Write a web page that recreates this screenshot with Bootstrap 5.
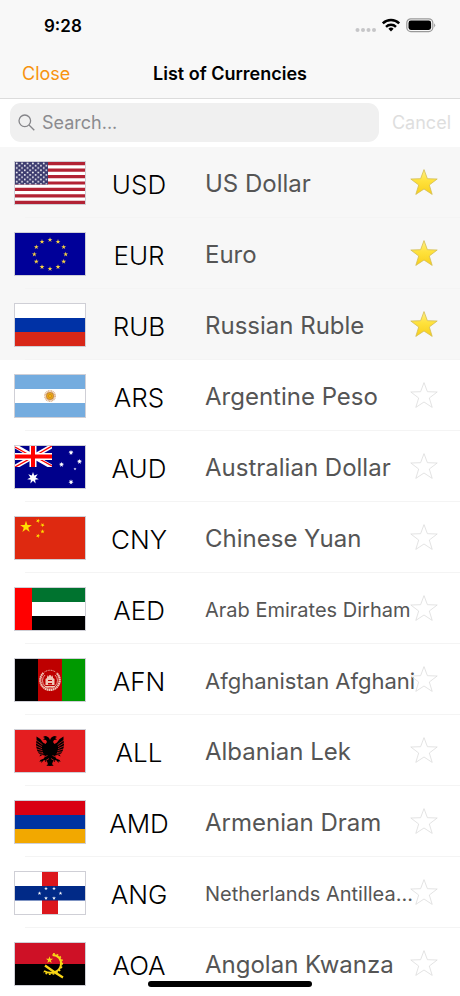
<!DOCTYPE html>
<html lang="en">
<head>
<meta charset="utf-8">
<meta name="viewport" content="width=device-width, initial-scale=1">
<title>List of Currencies</title>
<link href="https://cdn.jsdelivr.net/npm/bootstrap@5.3.0/dist/css/bootstrap.min.css" rel="stylesheet">
<style>
  body { font-family: Inter, "Liberation Sans", sans-serif; color: #000; background: #fff; }
  .top-area { background: #f8f8f8; border-bottom: 1px solid #dcdcdc; }
  .status-bar { height: 50px; padding: 2px 24px 0 44px; }
  .clock { font-size: 17px; font-weight: 600; line-height: 20px; }
  .title-bar { display: grid; grid-template-columns: 1fr auto 1fr; height: 48px; padding: 0 22px; }
  .title-bar h1 { font-size: 18px; font-weight: 600; line-height: 24px; }
  .plain-btn { border: 0; background: none; padding: 0; font-size: 18px; line-height: 24px; }
  .close-btn { color: #f7930f; }
  .cancel-btn { color: #dedede; }
  .search-row { padding: 4px 9px 5px 10px; gap: 13px; }
  .search-box { background: #f0f0f0; border-radius: 11px; height: 39px; padding: 0 8px; gap: 7px; }
  .search-box input { border: 0; background: none; outline: 0; padding: 0; min-width: 0; font-size: 18px; line-height: 24px; }
  .search-box input::placeholder { color: #8b8b8f; opacity: 1; }
  .money-list { overflow-y: auto; scrollbar-width: none; min-height: 0; }
  .money-list::-webkit-scrollbar { display: none; }
  .money-row { display: grid; grid-template-columns: 72px 106px 1fr 28px; height: 71px; flex-shrink: 0; padding: 1px 22px 0 14px; align-items: center;
    background: linear-gradient(#f4f4f4, #f4f4f4) 25px 100% / 100% 1px no-repeat; }
  .money-row.favourite { background-color: #f7f7f7; }
  .flag { width: 72px; height: 44px; border: 1px solid #cfcfd6; display: block; }
  .code { font-size: 26px; font-weight: 300; line-height: 32px; padding-top: 3px; text-align: center; }
  .money-name { font-size: 24px; line-height: 32px; color: #555; padding: 2px 0 0 13px; white-space: nowrap; min-width: 0; }
  .size-m { font-size: 22px; }
  .size-s { font-size: 20px; }
  .star-btn svg { width: 28px; height: 28px; display: block; fill: none; stroke: #dcdcdc; }
  .favourite .star-btn svg { fill: url(#gold); stroke: #d3bd52; }
  .home-bar { position: fixed; left: 50%; bottom: 9px; width: 164px; height: 6px; margin-left: -82px; border-radius: 3px; background: #000; }
</style>
<script src="https://cdn.jsdelivr.net/npm/bootstrap@5.3.0/dist/js/bootstrap.bundle.min.js"></script>
</head>
<body>
<svg width="0" height="0" class="position-absolute" aria-hidden="true">
  <defs>
    <linearGradient id="gold" x1="0" y1="0" x2="0" y2="1"><stop offset="0" stop-color="#fff08a"/><stop offset=".45" stop-color="#ffe23c"/><stop offset="1" stop-color="#f8cf1c"/></linearGradient>
    <pattern id="canton" width="5.4" height="4.6" patternUnits="userSpaceOnUse"><circle cx="1.7" cy="1.4" r=".9" fill="#fff"/><circle cx="4.4" cy="3.7" r=".9" fill="#fff"/></pattern>
    <polygon id="s5" points="0,-1 .225,-.309 .951,-.309 .363,.118 .588,.809 0,.382 -.588,.809 -.363,.118 -.951,-.309 -.225,-.309"/>
    <polygon id="s7" points="0,-1 .2,-.41 .78,-.62 .44,-.1 .97,.22 .36,.28 .43,.9 0,.45 -.43,.9 -.36,.28 -.97,.22 -.44,-.1 -.78,-.62 -.2,-.41"/>
    <symbol id="fav" viewBox="-14 -14 28 28"><path d="M0-13.4 3.4-4.3 13.2-4 5.3 2 8.2 11.4 0 6-8.2 11.4-5.3 2-13.2-4-3.4-4.3Z" stroke-width=".8" stroke-linejoin="round"/></symbol>
  </defs>
</svg>
<div class="vh-100 d-flex flex-column overflow-hidden">
  <header class="top-area flex-shrink-0">
    <div class="status-bar d-flex align-items-center">
      <span class="clock">9:28</span>
      <svg class="ms-auto" width="82" height="20" viewBox="0 0 82 20" aria-hidden="true">
        <g fill="#c6c6c8"><circle cx="3.500" cy="14" r="2"/><circle cx="9" cy="14" r="2"/><circle cx="14.500" cy="14" r="2"/><circle cx="20" cy="14" r="2"/></g>
        <g fill="none" stroke="#000" stroke-width="2.500"><path d="M28.800 7.300a11.800 11.800 0 0 1 16.400 0"/><path d="M32 10.800a7.300 7.300 0 0 1 10 0"/></g>
        <path d="M34.400 12.700a4 4 0 0 1 5.200 0L37 15.600Z"/>
        <rect x="52.800" y="2.800" width="26" height="12.800" rx="4" fill="none" stroke="#999" stroke-width="1.200"/>
        <rect x="54.500" y="4.500" width="22.600" height="9.400" rx="2.400"/>
        <path d="M80.200 7.200q2 2 0 4.200Z" fill="#999"/>
      </svg>
    </div>
    <nav class="title-bar align-items-center" aria-label="Title bar">
      <button type="button" class="plain-btn close-btn text-start">Close</button>
      <h1 class="m-0">List of Currencies</h1>
    </nav>
  </header>
  <form class="search-row d-flex align-items-center flex-shrink-0" role="search">
    <label class="search-box d-flex align-items-center flex-grow-1" for="search">
      <svg width="17" height="17" viewBox="0 0 17 17" fill="none" stroke="#858589" stroke-width="1.300" aria-hidden="true"><circle cx="6.800" cy="6.800" r="5.800"/><path d="m11 11 5.300 5.300"/></svg>
      <input id="search" type="text" class="flex-grow-1" placeholder="Search..." aria-label="Search currencies">
    </label>
    <button type="button" class="plain-btn cancel-btn" disabled>Cancel</button>
  </form>
  <main class="money-list d-flex flex-column flex-grow-1">
    <div class="money-row favourite">
      <svg class="flag" viewBox="0 0 70 42" preserveAspectRatio="none" role="img" aria-label="United States"><path fill="#fff" d="M0 0h70v42H0z"/><path stroke="#b22234" stroke-width="3.230" d="M0 1.620h70M0 8.080h70M0 14.540h70M0 21h70M0 27.460h70M0 33.920h70M0 40.380h70"/><path fill="#3c3b6e" d="M0 0h33v22.600H0z"/><path fill="url(#canton)" d="M0 0h32.500v22.600H0z"/></svg>
      <span class="code">USD</span><span class="money-name">US Dollar</span>
      <button type="button" class="plain-btn star-btn" aria-label="Remove US Dollar from favourites"><svg><use href="#fav"/></svg></button>
    </div>
    <div class="money-row favourite">
      <svg class="flag" viewBox="0 0 70 42" preserveAspectRatio="none" role="img" aria-label="European Union"><path fill="#009" d="M0 0h70v42H0z"/><g fill="#f5d142" transform="translate(35 21.300)"><use href="#s5" transform="translate(0 -14.500) scale(2.600)"/><use href="#s5" transform="translate(8 -12.600) scale(2.600)"/><use href="#s5" transform="translate(13.700 -7.300) scale(2.600)"/><use href="#s5" transform="translate(15.700 0) scale(2.600)"/><use href="#s5" transform="translate(13.700 7.300) scale(2.600)"/><use href="#s5" transform="translate(8 12.600) scale(2.600)"/><use href="#s5" transform="translate(0 14.500) scale(2.600)"/><use href="#s5" transform="translate(-8 12.600) scale(2.600)"/><use href="#s5" transform="translate(-13.700 7.300) scale(2.600)"/><use href="#s5" transform="translate(-15.700 0) scale(2.600)"/><use href="#s5" transform="translate(-13.700 -7.300) scale(2.600)"/><use href="#s5" transform="translate(-8 -12.600) scale(2.600)"/></g></svg>
      <span class="code">EUR</span><span class="money-name">Euro</span>
      <button type="button" class="plain-btn star-btn" aria-label="Remove Euro from favourites"><svg><use href="#fav"/></svg></button>
    </div>
    <div class="money-row favourite">
      <svg class="flag" viewBox="0 0 70 42" preserveAspectRatio="none" role="img" aria-label="Russia"><path fill="#fff" d="M0 0h70v14H0z"/><path fill="#0032a6" d="M0 14h70v14H0z"/><path fill="#d82718" d="M0 28h70v14H0z"/></svg>
      <span class="code">RUB</span><span class="money-name">Russian Ruble</span>
      <button type="button" class="plain-btn star-btn" aria-label="Remove Russian Ruble from favourites"><svg><use href="#fav"/></svg></button>
    </div>
    <div class="money-row">
      <svg class="flag" viewBox="0 0 70 42" preserveAspectRatio="none" role="img" aria-label="Argentina"><path fill="#74acdf" d="M0 0h70v42H0z"/><path fill="#fff" d="M0 14h70v14H0z"/><circle cx="35" cy="21" r="5" fill="none" stroke="#dfb48c" stroke-width="2" stroke-dasharray="1 .5"/><circle cx="35" cy="21" r="4" fill="#c98a3a"/><circle cx="35" cy="21" r="2.800" fill="#f6b40e"/><circle cx="35" cy="21" r="1.700" fill="none" stroke="#bd7a20" stroke-width=".6"/></svg>
      <span class="code">ARS</span><span class="money-name">Argentine Peso</span>
      <button type="button" class="plain-btn star-btn" aria-label="Add Argentine Peso to favourites"><svg><use href="#fav"/></svg></button>
    </div>
    <div class="money-row">
      <svg class="flag" viewBox="0 0 70 42" preserveAspectRatio="none" role="img" aria-label="Australia"><path fill="#00008b" d="M0 0h70v42H0z"/><svg width="37" height="21" viewBox="0 0 37 21"><path stroke="#fff" stroke-width="4.400" d="m0 0 37 21M37 0 0 21"/><path stroke="#f00" stroke-width="1.400" d="m0 1 18 10M37 0 18 11M0 21l18-10M37 20 19 10"/><path stroke="#fff" stroke-width="7" d="M18 0v21M0 10.500h37"/><path stroke="#f00" stroke-width="4" d="M18 0v21M0 10.500h37"/></svg><g fill="#fff"><use href="#s7" transform="translate(18 32) scale(6)"/><use href="#s7" transform="translate(56 6.500) scale(2.700)"/><use href="#s7" transform="translate(64.500 15.500) scale(2.700)"/><use href="#s7" transform="translate(46.500 18.500) scale(2.700)"/><use href="#s5" transform="translate(60 23) scale(1.600)"/><use href="#s7" transform="translate(56 36) scale(2.700)"/></g></svg>
      <span class="code">AUD</span><span class="money-name">Australian Dollar</span>
      <button type="button" class="plain-btn star-btn" aria-label="Add Australian Dollar to favourites"><svg><use href="#fav"/></svg></button>
    </div>
    <div class="money-row">
      <svg class="flag" viewBox="0 0 70 42" preserveAspectRatio="none" role="img" aria-label="China"><path fill="#de2910" d="M0 0h70v42H0z"/><g fill="#ffde00"><use href="#s5" transform="translate(11 10) scale(6.200)"/><use href="#s5" transform="translate(23 3.800) rotate(20) scale(2.300)"/><use href="#s5" transform="translate(27.500 8) rotate(45) scale(2.300)"/><use href="#s5" transform="translate(27.500 14.500) scale(2.300)"/><use href="#s5" transform="translate(23 18.800) rotate(20) scale(2.300)"/></g></svg>
      <span class="code">CNY</span><span class="money-name">Chinese Yuan</span>
      <button type="button" class="plain-btn star-btn" aria-label="Add Chinese Yuan to favourites"><svg><use href="#fav"/></svg></button>
    </div>
    <div class="money-row">
      <svg class="flag" viewBox="0 0 70 42" preserveAspectRatio="none" role="img" aria-label="United Arab Emirates"><path fill="#00732f" d="M0 0h70v14H0z"/><path fill="#fff" d="M0 14h70v14H0z"/><path d="M0 28h70v14H0z"/><path fill="#f00" d="M0 0h17v42H0z"/></svg>
      <span class="code">AED</span><span class="money-name size-s">Arab Emirates Dirham</span>
      <button type="button" class="plain-btn star-btn" aria-label="Add Arab Emirates Dirham to favourites"><svg><use href="#fav"/></svg></button>
    </div>
    <div class="money-row">
      <svg class="flag" viewBox="0 0 70 42" preserveAspectRatio="none" role="img" aria-label="Afghanistan"><path d="M0 0h23v42H0z"/><path fill="#be0000" d="M23 0h24v42H23z"/><path fill="#090" d="M47 0h23v42H47z"/><g fill="none" stroke="#f0c8b8"><path stroke-width="2.200" stroke-dasharray="1.600 .4" d="M28.500 14a9.700 9.700 0 1 0 13 0"/><path stroke-width=".8" d="M30 16a7.500 7.500 0 1 0 10 0"/><path stroke-width="1" stroke-dasharray="1 .7" d="M29.500 13q5.500-3.500 11 0"/></g><path fill="#f0c8b8" d="M30.500 26v-6l1.500-1v-3l1 2q2-4 4 0l1-2v3l1.500 1v6ZM30 27h10v1.300H30Z"/><path fill="#be0000" d="M33 24h4v1.500h-4zM33 21h4v1h-4z"/></svg>
      <span class="code">AFN</span><span class="money-name size-m">Afghanistan Afghani</span>
      <button type="button" class="plain-btn star-btn" aria-label="Add Afghanistan Afghani to favourites"><svg><use href="#fav"/></svg></button>
    </div>
    <div class="money-row">
      <svg class="flag" viewBox="0 0 70 42" preserveAspectRatio="none" role="img" aria-label="Albania"><path fill="#e41e20" d="M0 0h70v42H0z"/><g id="wing"><path d="M35 10c-1-3-3-4-5-4l-2 1 2 1-2 1.500 3 .5 1 2-1.500 2-2.500-1.500q-2-4-6.500-6v4l-.5 3 .2 3 .5 2.500.7 2 1 2 2 1.500-1 2 3-1.500 2.500.5-1 3-3.500 1.500-1 2 2-1v2l2-2.500 2-.5-.5 2 2-1 1 3-1.500 2 1.500-.3L35 36Z"/><path stroke="#e41e20" stroke-width=".7" fill="none" d="M20.500 9.700l7 5M20.500 12.700l6.500 4M20.500 15.700l6.500 3M20.500 18.700l7 2M21 21.700l7 .8M22 24.700l6.500-.9M28.500 27.300l4-1.800M31 30.500l3-2"/></g><use href="#wing" transform="matrix(-1 0 0 1 70 0)"/></svg>
      <span class="code">ALL</span><span class="money-name">Albanian Lek</span>
      <button type="button" class="plain-btn star-btn" aria-label="Add Albanian Lek to favourites"><svg><use href="#fav"/></svg></button>
    </div>
    <div class="money-row">
      <svg class="flag" viewBox="0 0 70 42" preserveAspectRatio="none" role="img" aria-label="Armenia"><path fill="#d90012" d="M0 0h70v14H0z"/><path fill="#0033a0" d="M0 14h70v14H0z"/><path fill="#f2a800" d="M0 28h70v14H0z"/></svg>
      <span class="code">AMD</span><span class="money-name">Armenian Dram</span>
      <button type="button" class="plain-btn star-btn" aria-label="Add Armenian Dram to favourites"><svg><use href="#fav"/></svg></button>
    </div>
    <div class="money-row">
      <svg class="flag" viewBox="0 0 70 42" preserveAspectRatio="none" role="img" aria-label="Netherlands Antilles"><path fill="#fff" d="M0 0h70v42H0z"/><path fill="#dc171d" d="M27 0h16v42H27z"/><path fill="#012a87" d="M0 14h70v14.500H0z"/><g fill="#fff"><use href="#s5" transform="translate(24.500 21.300) scale(2)"/><use href="#s5" transform="translate(45.500 21.300) scale(2)"/><use href="#s5" transform="translate(31 16.500) scale(2)"/><use href="#s5" transform="translate(39 16.500) scale(2)"/><use href="#s5" transform="translate(31 26.200) scale(2)"/><use href="#s5" transform="translate(39 26.200) scale(2)"/></g></svg>
      <span class="code">ANG</span><span class="money-name size-s">Netherlands Antillea...</span>
      <button type="button" class="plain-btn star-btn" aria-label="Add Netherlands Antillean Guilder to favourites"><svg><use href="#fav"/></svg></button>
    </div>
    <div class="money-row">
      <svg class="flag" viewBox="0 0 70 42" preserveAspectRatio="none" role="img" aria-label="Angola"><path fill="#ce1126" d="M0 0h70v21H0z"/><path d="M0 21h70v21H0z"/><use href="#s5" fill="#f9d616" transform="translate(34.500 17) scale(3.700)"/><g fill="none" stroke="#f9d616"><path stroke-width="2" d="M37.500 12c6 0 9.500 5 8.300 10.500C44.500 29 36 32 29 28"/><path stroke-width="1.500" stroke-dasharray="1.800 1.800" d="M38 10.800c7 .2 10.500 6 9 12C45 30.500 36 33.500 28.500 29.500"/><path stroke-width="2.200" d="M30 22.500q8 6 18 12"/></g></svg>
      <span class="code">AOA</span><span class="money-name">Angolan Kwanza</span>
      <button type="button" class="plain-btn star-btn" aria-label="Add Angolan Kwanza to favourites"><svg><use href="#fav"/></svg></button>
    </div>
  </main>
</div>
<div class="home-bar" aria-hidden="true"></div>
</body>
</html>
